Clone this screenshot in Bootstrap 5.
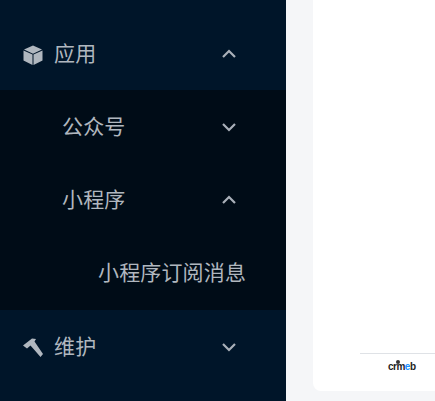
<!DOCTYPE html>
<html lang="en">
<head>
  <meta charset="UTF-8">
  <meta name="viewport" content="width=device-width, initial-scale=1.0">
  <title>应用</title>
  <link href="https://cdn.jsdelivr.net/npm/bootstrap@5.3.0/dist/css/bootstrap.min.css" rel="stylesheet">
  <style>
    html, body { height: 401px; overflow: hidden; }
    body {
      background-color: #f5f6f8;
      font-family: "Noto Sans CJK SC", "Liberation Sans", sans-serif;
    }
    .side-menu {
      width: 286px;
      height: 401px;
      padding-top: 17px;
      background-color: #001529;
      color: #b0b7bf;
      font-size: 21px;
      letter-spacing: .15px;
    }
    .menu-row { height: 73px; padding-right: 49px; white-space: nowrap; }
    .menu-row > span { position: relative; top: -1px; }
    .menu-row svg.arrow { width: 16px; height: 10px; margin-left: auto; }
    .menu-row svg.ico { width: 20px; height: 20px; margin-left: 23px; margin-right: 11px; margin-top: 3px; }
    .sub-menu { background-color: #000c17; height: 220px; }
    .lvl2 { padding-left: 62px; }
    .lvl3 { padding-left: 98px; }
    .main-wrap { padding-left: 27px; height: 401px; min-width: 0; }
    .white-box {
      background: #fff;
      height: 391px;
      border-bottom-left-radius: 8px;
      padding-top: 353px;
      padding-left: 47px;
    }
    .foot-line { border-top: 1px solid #dfe2e6; padding-top: 6px; padding-left: 28px; }
    .crmeb-logo {
      position: relative;
      width: 30px;
      font-family: "Liberation Sans", sans-serif;
      font-size: 10px;
      font-weight: 700;
      line-height: 14px;
      color: #222;
      letter-spacing: -0.5px;
    }
    .crmeb-logo span { color: #1890ff; }
    .crmeb-logo::before {
      content: "";
      position: absolute;
      left: 8px;
      top: 0;
      width: 4px;
      height: 4px;
      border-radius: 50%;
      background: #333;
    }
  </style>
</head>
<body>
  <div class="d-flex">
    <div class="side-menu flex-shrink-0">
      <div class="menu-row d-flex align-items-center">
        <svg class="ico" viewBox="0 0 20 20"><path fill="#b0b7bf" d="M10 .5l9 4-9 4.300-9-4.300zM.5 5.500l9 4V20L.5 15.500zM19.500 5.500l-9 4V20l9-4.500z"/></svg>
        <span>应用</span>
        <svg class="arrow" viewBox="0 0 16 10"><path fill="none" stroke="#a9b0b9" stroke-width="2.200" d="M2 8l6-6 6 6"/></svg>
      </div>
      <div class="sub-menu">
        <div class="menu-row lvl2 d-flex align-items-center">
          <span>公众号</span>
          <svg class="arrow" viewBox="0 0 16 10"><path fill="none" stroke="#a9b0b9" stroke-width="2.200" d="M2 2l6 6 6-6"/></svg>
        </div>
        <div class="menu-row lvl2 d-flex align-items-center">
          <span>小程序</span>
          <svg class="arrow" viewBox="0 0 16 10"><path fill="none" stroke="#a9b0b9" stroke-width="2.200" d="M2 8l6-6 6 6"/></svg>
        </div>
        <div class="menu-row lvl3 d-flex align-items-center">
          <span>小程序订阅消息</span>
        </div>
      </div>
      <div class="menu-row d-flex align-items-center">
        <svg class="ico" viewBox="0 0 20 20"><path fill="#b0b7bf" d="M0 7.500L9 .5l4 .5-1.500 2.500L20 16l-2.500 3L7.500 7.500 4 10.500z"/></svg>
        <span>维护</span>
        <svg class="arrow" viewBox="0 0 16 10"><path fill="none" stroke="#a9b0b9" stroke-width="2.200" d="M2 2l6 6 6-6"/></svg>
      </div>
    </div>
    <div class="main-wrap flex-grow-1">
      <div class="white-box">
        <div class="foot-line">
          <div class="crmeb-logo">crm<span>e</span>b</div>
        </div>
      </div>
    </div>
  </div>
  <script src="https://cdn.jsdelivr.net/npm/bootstrap@5.3.0/dist/js/bootstrap.bundle.min.js"></script>
</body>
</html>
